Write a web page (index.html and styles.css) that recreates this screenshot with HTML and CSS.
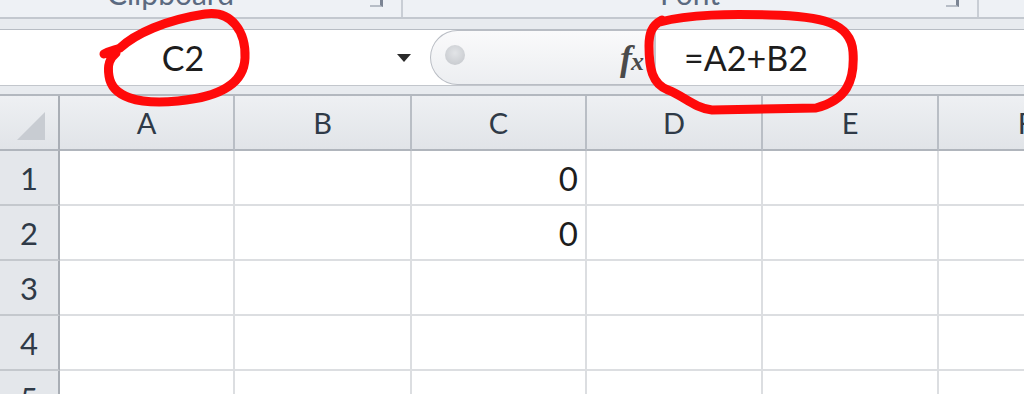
FILE: index.html
```html
<!DOCTYPE html>
<html lang="en">

<head>
    <meta charset="UTF-8">
    <meta name="viewport" content="width=device-width, initial-scale=1.0">
    <title>Formula Bar</title>
    <link rel="stylesheet" href="styles.css">
</head>

<body>
    <div class="sheet">
        <!-- ribbon group labels, cut off at the top -->
        <div class="ribbon">
            <div class="group group-clipboard">
                <span class="group-label">Clipboard</span>
                <span class="launcher"></span>
            </div>
            <div class="group group-font">
                <span class="group-label">Font</span>
                <span class="launcher"></span>
            </div>
            <div class="group group-rest"></div>
        </div>

        <div class="band"></div>

        <div class="formula-bar">
            <div class="name-box">
                <span class="name-text">C2</span>
                <span class="name-arrow"></span>
            </div>
            <div class="fx-area">
                <span class="knob"></span>
                <span class="fx"><i class="fx-f">f</i><i class="fx-x">x</i></span>
            </div>
            <div class="formula-input">=A2+B2</div>
        </div>

        <div class="band band-bottom"></div>

        <div class="grid">
            <div class="corner"><span class="select-all"></span></div>
            <div class="col-head">A</div>
            <div class="col-head">B</div>
            <div class="col-head">C</div>
            <div class="col-head">D</div>
            <div class="col-head">E</div>
            <div class="col-head">F</div>

            <div class="row-head">1</div>
            <div class="cell"></div>
            <div class="cell"></div>
            <div class="cell num">0</div>
            <div class="cell"></div>
            <div class="cell"></div>
            <div class="cell"></div>

            <div class="row-head">2</div>
            <div class="cell"></div>
            <div class="cell"></div>
            <div class="cell num">0</div>
            <div class="cell"></div>
            <div class="cell"></div>
            <div class="cell"></div>

            <div class="row-head">3</div>
            <div class="cell"></div>
            <div class="cell"></div>
            <div class="cell"></div>
            <div class="cell"></div>
            <div class="cell"></div>
            <div class="cell"></div>

            <div class="row-head">4</div>
            <div class="cell"></div>
            <div class="cell"></div>
            <div class="cell"></div>
            <div class="cell"></div>
            <div class="cell"></div>
            <div class="cell"></div>

            <div class="row-head">5</div>
            <div class="cell"></div>
            <div class="cell"></div>
            <div class="cell"></div>
            <div class="cell"></div>
            <div class="cell"></div>
            <div class="cell"></div>
        </div>

        <!-- hand drawn red marks over the screenshot -->
        <svg class="marks" width="1024" height="394" viewBox="0 0 1024 394">
            <path d="M104 54 C112 50 116 50 120 48 C135 34 165 20 205 14 C232 10 246 32 245 58 C244 84 220 97 178 101 C138 105 112 97 109 76 C107 64 110 58 116 53" />
            <path d="M660 22 C690 14 730 14 770 15 C820 16 851 22 853 52 C855 82 846 100 816 108 L712 110 C694 108 684 96 668 90 C652 84 649 68 649 46 C649 34 651 26 662 20" />
        </svg>
    </div>
</body>

</html>
```

FILE: styles.css
```css
body {
    margin: 0;
    padding: 0;
    font-family: Lato, "Open Sans", sans-serif;
    background-color: white;
}

.sheet {
    position: relative;
    width: 1024px;
    height: 394px;
    overflow: hidden;
}

/* ribbon */
.ribbon {
    display: flex;
    height: 17px;
    background-color: #eef1f5;
    border-bottom: 2px solid #c3c8cf;
}

.group {
    position: relative;
    display: flex;
    justify-content: center;
    overflow: hidden;
    border-right: 2px solid #c9ced5;
}

.group-clipboard {
    width: 401px;
}

.group-font {
    width: 574px;
}

.group-rest {
    flex-grow: 1;
    border-right: none;
}

.group-label {
    font-size: 30px;
    line-height: 30px;
    margin-top: -22px;
    color: #5b6a80;
}

.group-clipboard .group-label {
    margin-right: 60px;
}

.launcher {
    position: absolute;
    right: 18px;
    top: 0;
    width: 10px;
    height: 5px;
    border-right: 3px solid #7b8493;
    border-bottom: 2px solid #b7bdc6;
}

.band {
    height: 10px;
    background-color: #e8ebef;
    border-bottom: 1px solid #b8bdc4;
}

.band-bottom {
    height: 8px;
    border-top: 1px solid #c2c6cc;
    border-bottom: 2px solid #b3b8bf;
}

/* formula bar */
.formula-bar {
    display: flex;
    height: 55px;
    background-color: white;
}

.name-box {
    display: flex;
    align-items: center;
    width: 430px;
}

.name-text {
    width: 366px;
    text-align: center;
    font-size: 34px;
    color: #1d1d1d;
}

.name-arrow {
    margin-left: 31px;
    width: 0;
    height: 0;
    border-left: 7px solid transparent;
    border-right: 7px solid transparent;
    border-top: 8px solid #2a2a2a;
}

.fx-area {
    display: flex;
    align-items: center;
    justify-content: space-between;
    width: 226px;
    box-sizing: border-box;
    padding: 0 14px 0 14px;
    border: 1px solid #b9bdc4;
    border-right: 2px solid #c4c8ce;
    border-radius: 28px 0 0 28px;
    background: linear-gradient(#fafafb, #eceef1);
}

.knob {
    width: 20px;
    height: 20px;
    margin-top: -6px;
    border-radius: 50%;
    background: radial-gradient(circle at 50% 40%, #e2e4e7, #c2c5ca);
}

.fx {
    font-family: "Liberation Serif", serif;
    font-weight: bold;
    color: #4a4a4a;
    white-space: nowrap;
    margin-right: -4px;
}

.fx-f {
    font-size: 36px;
}

.fx-x {
    font-size: 26px;
    margin-left: -1px;
}

.formula-input {
    display: flex;
    align-items: center;
    flex-grow: 1;
    padding-left: 28px;
    font-size: 34px;
    color: #1d1d1d;
}

/* grid */
.grid {
    display: grid;
    grid-template-columns: 60px 175px 177px 175px 176px 176px 176px;
    grid-template-rows: 55px repeat(5, 55px);
}

.corner,
.col-head {
    background: linear-gradient(#eef0f3, #e1e4e8);
    border-right: 2px solid #b9bec5;
    border-bottom: 2px solid #b0b5bc;
}

.corner {
    position: relative;
    border-right-color: #a9aeb5;
}

.select-all {
    position: absolute;
    right: 13px;
    bottom: 9px;
    width: 0;
    height: 0;
    border-left: 28px solid transparent;
    border-bottom: 28px solid #c8ccd2;
}

.col-head {
    display: flex;
    align-items: center;
    justify-content: center;
    font-size: 29px;
    color: #2f3a47;
}

.row-head {
    display: flex;
    align-items: center;
    justify-content: center;
    background-color: #e4e7eb;
    border-right: 2px solid #a9aeb5;
    border-bottom: 2px solid #c4c8cd;
    font-size: 31px;
    color: #2f3a47;
}

.cell {
    border-right: 2px solid #dcdee1;
    border-bottom: 2px solid #dcdee1;
}

.num {
    display: flex;
    align-items: center;
    justify-content: flex-end;
    padding-right: 7px;
    font-size: 33px;
    color: #1d1d1d;
}

.marks {
    position: absolute;
    left: 0;
    top: 0;
    pointer-events: none;
}

.marks path {
    fill: none;
    stroke: #ff0a0a;
    stroke-width: 9;
    stroke-linecap: round;
    stroke-linejoin: round;
}
```
